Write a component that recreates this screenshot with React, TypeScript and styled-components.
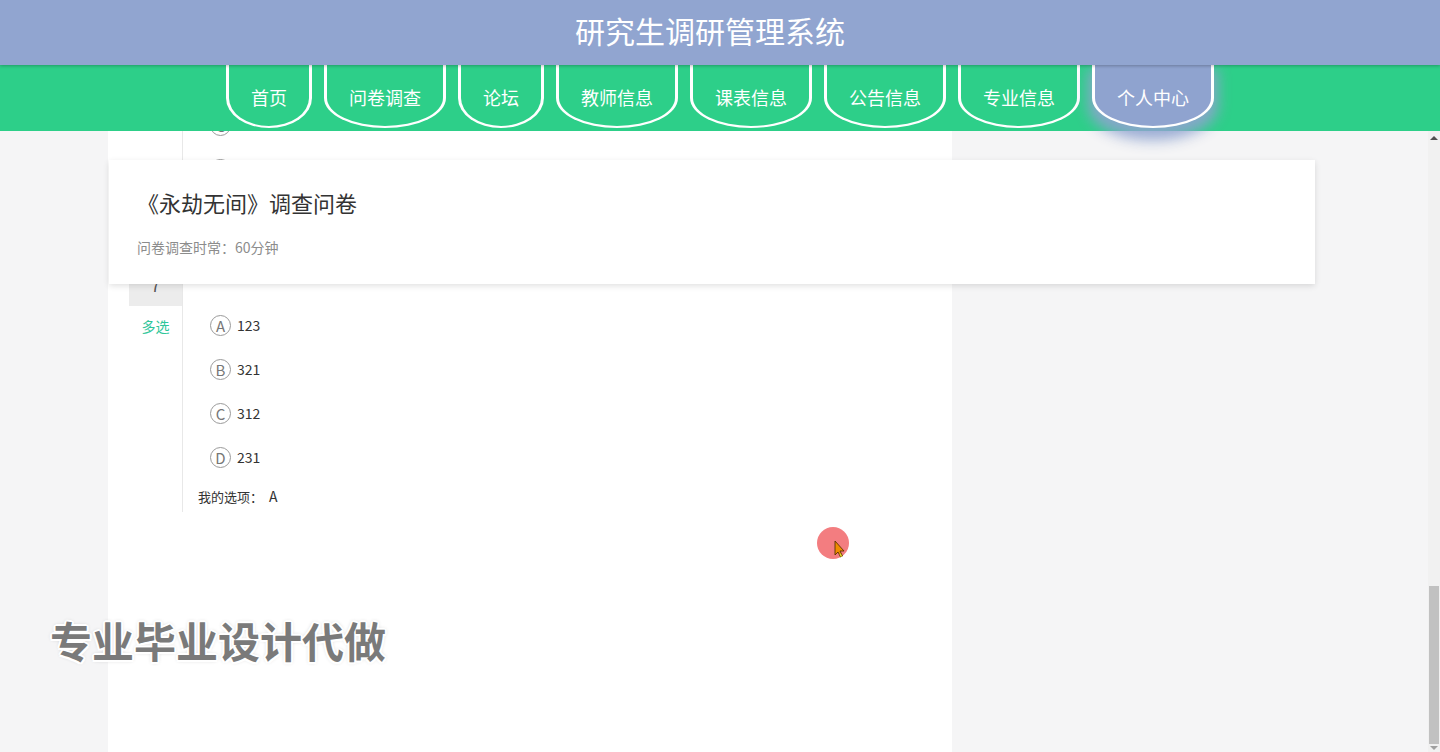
import React from "react";
import styled, { createGlobalStyle } from "styled-components";

const GlobalStyle = createGlobalStyle`
  html, body { margin: 0; padding: 0; }
  body {
    font-family: "Noto Sans CJK SC", "Noto Sans", sans-serif;
    background: #f5f5f6;
    overflow: hidden;
  }
  * { box-sizing: border-box; }
`;

const Page = styled.div`
  width: 1440px;
  height: 752px;
  display: flex;
  flex-direction: column;
  overflow: hidden;
`;

const Header = styled.header`
  height: 65px;
  flex: none;
  background: #91a5d0;
  color: #fff;
  display: flex;
  align-items: center;
  justify-content: center;
  padding: 0 20px 6px 0;
  font-size: 30px;
  position: relative;
  z-index: 3;
  box-shadow: 0 1px 3px rgba(0, 0, 0, 0.25);
`;

const Nav = styled.nav`
  height: 66px;
  flex: none;
  background: #2dcf89;
  display: flex;
  justify-content: center;
  gap: 12px;
  position: relative;
  z-index: 2;
`;

const NavItem = styled.div<{ $active?: boolean }>`
  height: 63px;
  padding: 3px 22px 0;
  display: flex;
  align-items: center;
  border: 3px solid #fff;
  border-top: 0;
  border-bottom-width: 2px;
  border-radius: 0 0 50% 50% / 0 0 30px 30px;
  color: #fff;
  font-size: 18px;
  background: ${(p) => (p.$active ? "#8fa3cf" : "transparent")};
  box-shadow: ${(p) =>
    p.$active ? "0 8px 14px 4px rgba(143, 163, 207, 0.9)" : "none"};
`;

const Body = styled.div`
  flex: 1;
  display: flex;
  min-height: 0;
`;

const Main = styled.main`
  flex: 1;
  position: relative;
  overflow: hidden;
  background: #f5f5f6;
  padding-left: 108px;
`;

const Column = styled.section`
  display: flow-root;
  width: 844px;
  height: 100%;
  background: #fff;
`;

const QuestionList = styled.div`
  margin-top: -28px;
`;

const Question = styled.div`
  display: flex;
`;

const Side = styled.div`
  width: 75px;
  flex: none;
  border-right: 1px solid #e8e8e8;
`;

const NumberBox = styled.div`
  margin-left: 21px;
  height: 66px;
  background: #ececec;
  padding-top: 36px;
  text-align: center;
  font-size: 16px;
  line-height: 18px;
  color: #555;
`;

const TypeLabel = styled.div`
  margin-top: 10px;
  padding-left: 21px;
  line-height: 20px;
  text-align: center;
  font-size: 14px;
  color: #2fc69a;
`;

const Content = styled.div<{ $pb: number }>`
  flex: 1;
  padding-left: 15px;
  padding-bottom: ${(p) => p.$pb}px;
`;

const TitleSpace = styled.div`
  height: 63px;
`;

const OptionRow = styled.div`
  height: 44px;
  margin-left: 12px;
  display: flex;
  align-items: center;
  gap: 6px;
`;

const Letter = styled.span`
  width: 21px;
  height: 21px;
  border: 1px solid #9a9a9a;
  border-radius: 50%;
  display: flex;
  align-items: center;
  justify-content: center;
  font-size: 15px;
  color: #777;
`;

const OptionText = styled.span`
  font-size: 14px;
  color: #333;
`;

const Mine = styled.div`
  height: 24px;
  margin-top: 5px;
  display: flex;
  align-items: center;
  font-size: 13px;
  color: #333;
`;

const Answer = styled.span`
  margin-left: 6px;
  font-size: 14px;
`;

const Card = styled.div`
  position: absolute;
  top: 29px;
  left: 109px;
  width: 1206px;
  height: 124px;
  background: #fff;
  box-shadow: 0 2px 6px rgba(0, 0, 0, 0.12);
  padding: 27px 28px 0;
`;

const CardTitle = styled.h1`
  margin: 0;
  font-size: 22px;
  line-height: 30px;
  font-weight: 400;
  color: #333;
`;

const CardSub = styled.div`
  margin-top: 20px;
  font-size: 14px;
  line-height: 20px;
  color: #8c8c8c;
`;

const Watermark = styled.div`
  position: absolute;
  left: 50px;
  top: 488px;
  font-size: 42px;
  line-height: 1;
  font-weight: 700;
  color: #7a7a7a;
  text-shadow: -2px 0 #fff, 2px 0 #fff, 0 -2px #fff, 0 2px #fff,
    -1.5px -1.5px #fff, 1.5px 1.5px #fff, -1.5px 1.5px #fff, 1.5px -1.5px #fff,
    0 0 4px rgba(0, 0, 0, 0.3);
`;

const Cursor = styled.div`
  position: absolute;
  left: 816px;
  top: 395px;
  width: 36px;
  height: 36px;
`;

const ScrollBar = styled.div`
  width: 12px;
  flex: none;
  background: #f1f1f1;
  display: flex;
  flex-direction: column;
  align-items: center;
`;

const Arrow = styled.div<{ $down?: boolean }>`
  margin-top: ${(p) => (p.$down ? "0" : "5px")};
  width: 0;
  height: 0;
  border-left: 4px solid transparent;
  border-right: 4px solid transparent;
  ${(p) =>
    p.$down
      ? "border-top: 4px solid #a0a0a0; margin-bottom: 2px;"
      : "border-bottom: 4px solid #505050;"}
`;

const Thumb = styled.div`
  margin-top: auto;
  margin-bottom: 2px;
  width: 10px;
  height: 158px;
  background: #c1c1c1;
`;

const navItems = [
  "首页",
  "问卷调查",
  "论坛",
  "教师信息",
  "课表信息",
  "公告信息",
  "专业信息",
  "个人中心",
];

type Opt = { key: string; text: string };

const Options: React.FC<{ opts: Opt[] }> = ({ opts }) => (
  <>
    {opts.map((o) => (
      <OptionRow key={o.key}>
        <Letter>{o.key}</Letter>
        <OptionText>{o.text}</OptionText>
      </OptionRow>
    ))}
  </>
);

export default function App() {
  return (
    <Page>
      <GlobalStyle />
      <Header>研究生调研管理系统</Header>
      <Nav>
        {navItems.map((n) => (
          <NavItem key={n} $active={n === "个人中心"}>
            {n}
          </NavItem>
        ))}
      </Nav>
      <Body>
        <Main>
          <Column>
            <QuestionList>
              <Question>
                <Side />
                <Content $pb={20}>
                  <Options
                    opts={[
                      { key: "C", text: "132" },
                      { key: "D", text: "213" },
                    ]}
                  />
                  <Mine>
                    我的选项：<Answer>B</Answer>
                  </Mine>
                </Content>
              </Question>
              <Question>
                <Side>
                  <NumberBox>7</NumberBox>
                  <TypeLabel>多选</TypeLabel>
                </Side>
                <Content $pb={4}>
                  <TitleSpace />
                  <Options
                    opts={[
                      { key: "A", text: "123" },
                      { key: "B", text: "321" },
                      { key: "C", text: "312" },
                      { key: "D", text: "231" },
                    ]}
                  />
                  <Mine>
                    我的选项：<Answer>A</Answer>
                  </Mine>
                </Content>
              </Question>
            </QuestionList>
          </Column>
          <Card>
            <CardTitle>《永劫无间》调查问卷</CardTitle>
            <CardSub>问卷调查时常：60分钟</CardSub>
          </Card>
          <Watermark>专业毕业设计代做</Watermark>
          <Cursor>
            <svg width="36" height="36" viewBox="0 0 36 36">
              <circle cx="17" cy="17" r="16" fill="#f26f72" opacity="0.9" />
              <path
                d="M19 15 L19 29 L22 26 L24.5 31 L26.5 30 L24 25 L28 25 Z"
                fill="#f08c00"
                stroke="#5a3200"
                strokeWidth="0.9"
                strokeLinejoin="round"
              />
              <path d="M23.5 28 L25 31 L26 30.5 L24.8 27.6 Z" fill="#d8e830" />
            </svg>
          </Cursor>
        </Main>
        <ScrollBar>
          <Arrow />
          <Thumb />
          <Arrow $down />
        </ScrollBar>
      </Body>
    </Page>
  );
}
